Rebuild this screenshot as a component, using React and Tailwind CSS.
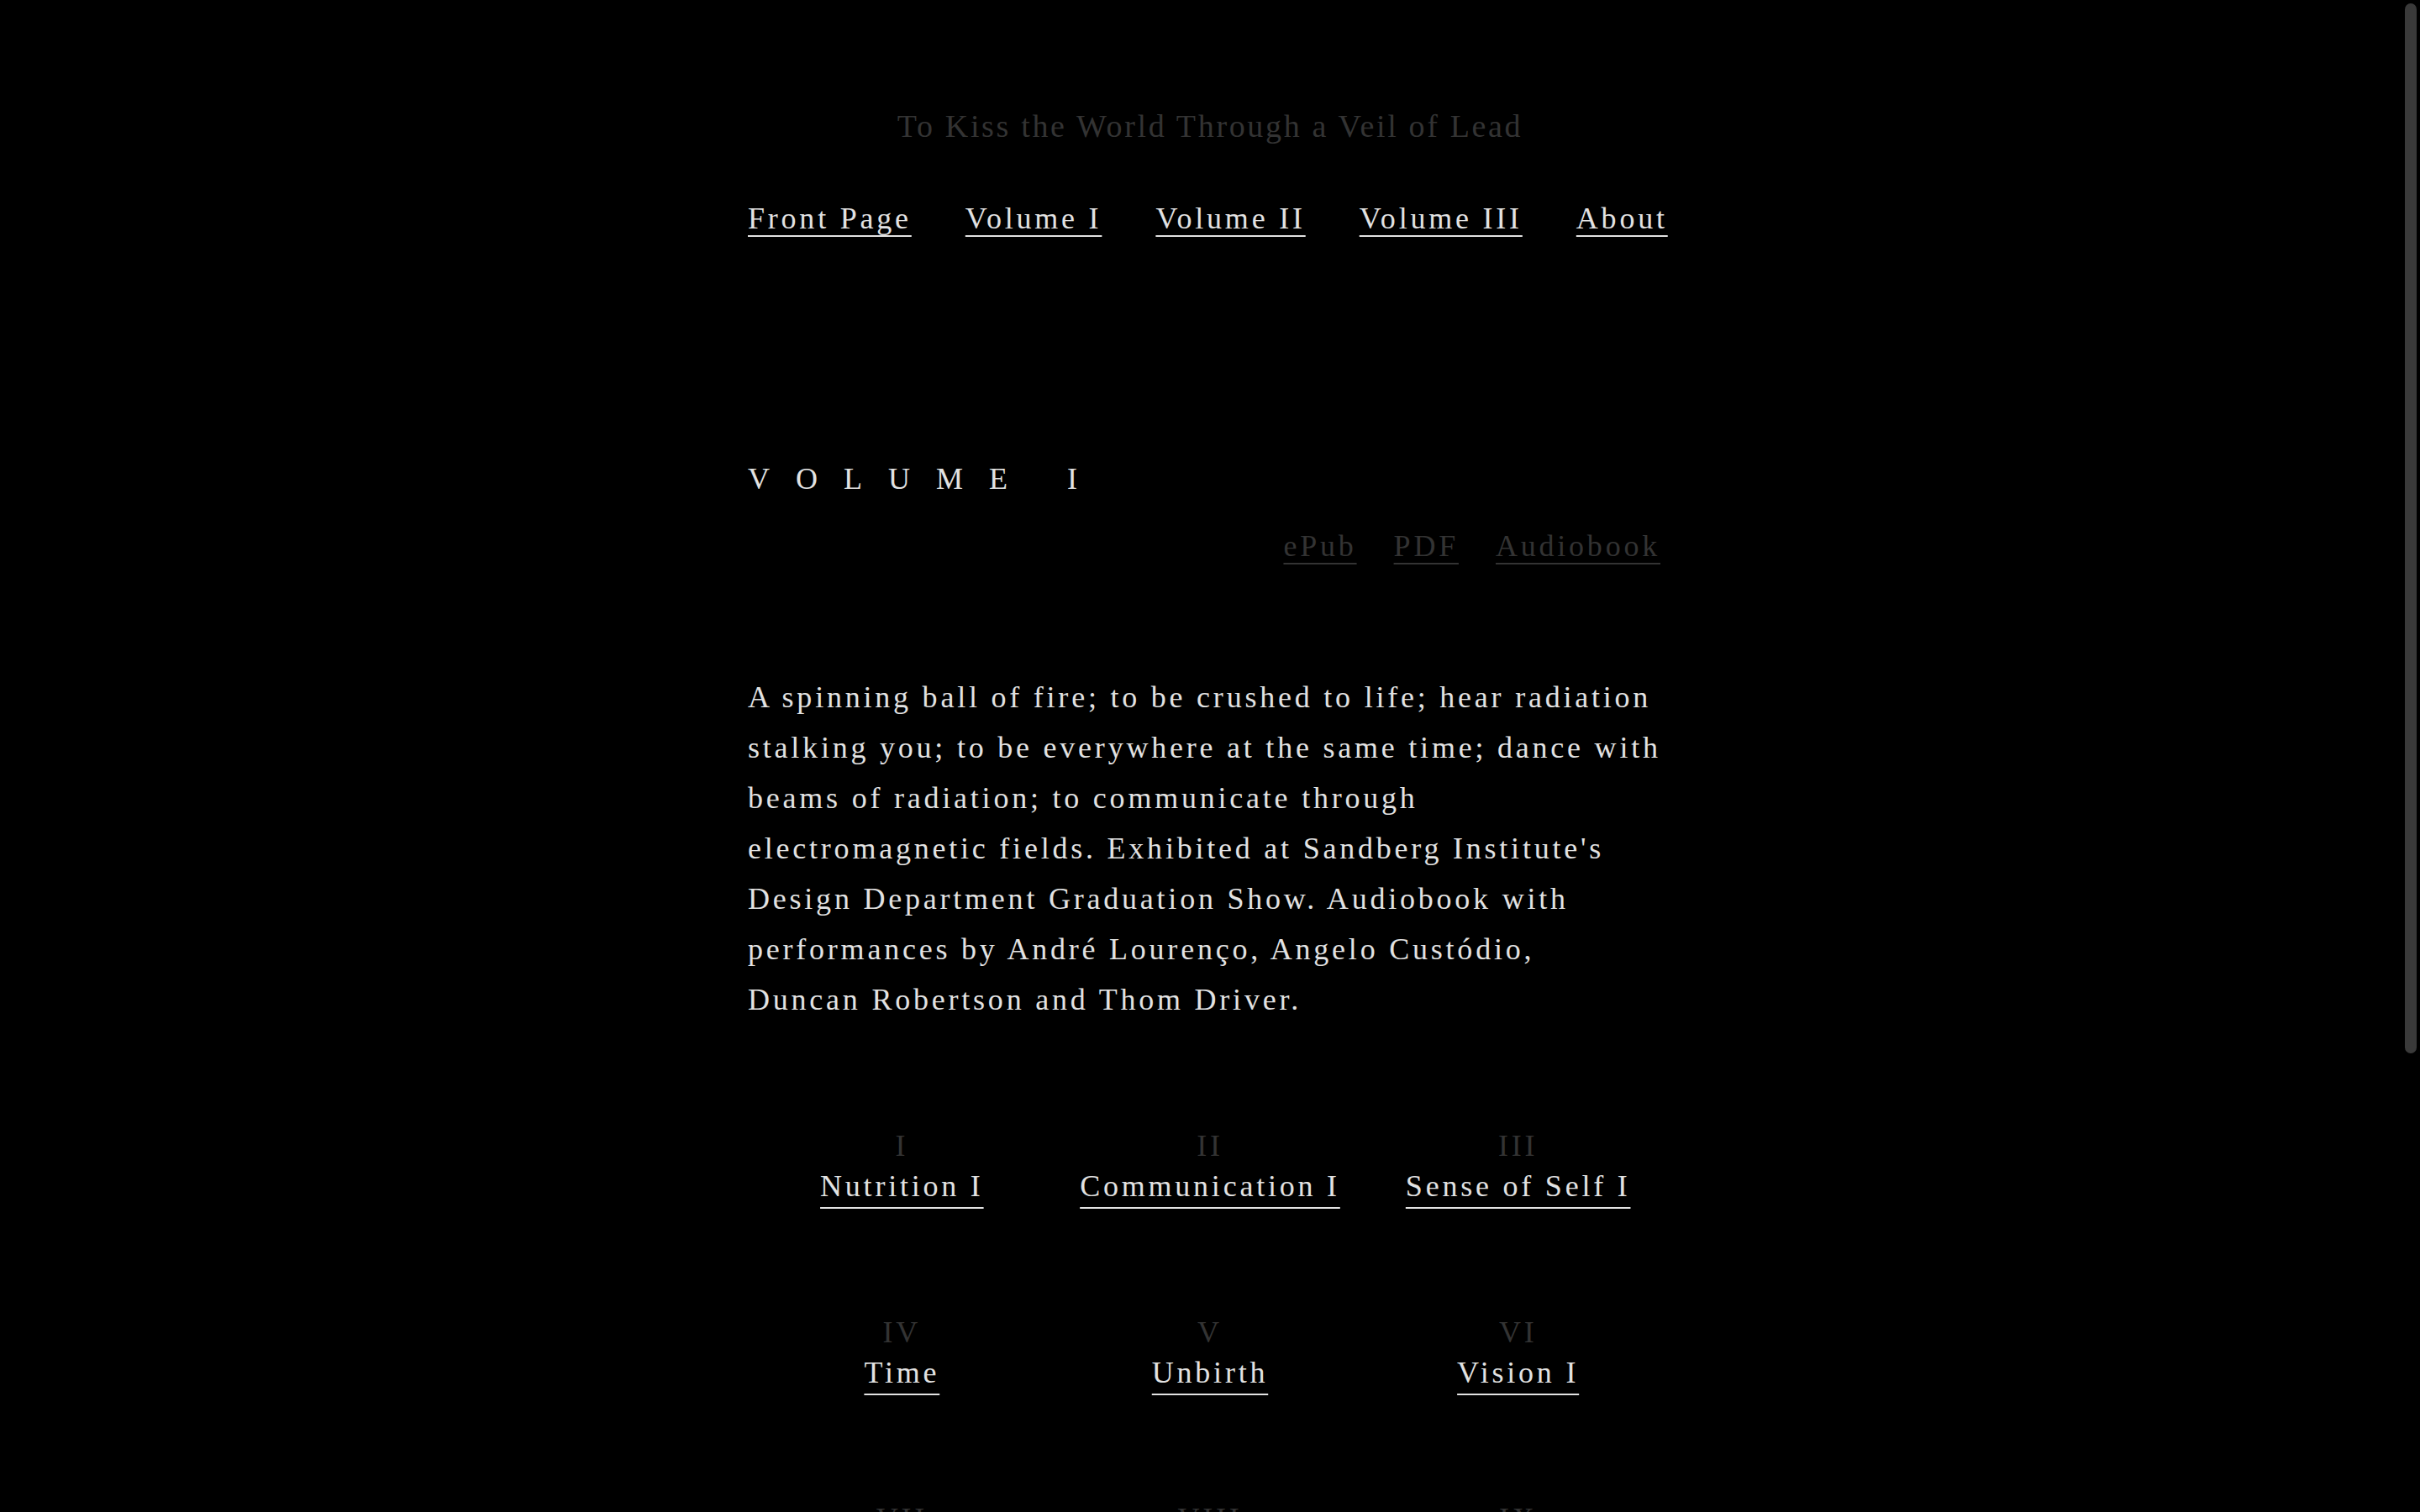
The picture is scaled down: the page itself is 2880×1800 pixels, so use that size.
const navItems = ['Front Page', 'Volume I', 'Volume II', 'Volume III', 'About'];

const chapters = [
  { num: 'I', title: 'Nutrition I' },
  { num: 'II', title: 'Communication I' },
  { num: 'III', title: 'Sense of Self I' },
  { num: 'IV', title: 'Time' },
  { num: 'V', title: 'Unbirth' },
  { num: 'VI', title: 'Vision I' },
  { num: 'VII', title: 'Nutrition II' },
  { num: 'VIII', title: 'Communication II' },
  { num: 'IX', title: 'Sense of Self II' },
];

export default function App() {
  return (
    <div className="relative h-screen overflow-hidden bg-black font-['Liberation_Serif',serif] text-[36px] tracking-[0.105em] text-[#e2e2e2]">
      <div className="mx-auto w-[1100px] pt-[120px]">
        <h1 className="text-center text-[38px] leading-[60px] tracking-[0.07em] text-[#333333] font-normal">
          To Kiss the World Through a Veil of Lead
        </h1>

        <nav className="mt-[50px] flex gap-[64px] leading-[60px]">
          {navItems.map(n => (
            <a key={n} href="#" className="underline decoration-2 underline-offset-[8px] [text-decoration-skip-ink:none]">{n}</a>
          ))}
        </nav>

        <h2 className="mt-[250px] leading-[60px] tracking-[31px] font-normal">VOLUME I</h2>

        <div className="mt-[20px] flex justify-end gap-[44px] pr-[14px] leading-[60px] text-[#333333]">
          <a href="#" className="underline decoration-2 underline-offset-[8px] [text-decoration-skip-ink:none]">ePub</a>
          <a href="#" className="underline decoration-2 underline-offset-[8px] [text-decoration-skip-ink:none]">PDF</a>
          <a href="#" className="underline decoration-2 underline-offset-[8px] [text-decoration-skip-ink:none]">Audiobook</a>
        </div>

        <p className="mt-[120px] w-[1092px] leading-[60px]">
          A spinning ball of fire; to be crushed to life; hear radiation stalking you; to be everywhere at the same time; dance with beams of radiation; to communicate through electromagnetic fields. Exhibited at Sandberg Institute's Design Department Graduation Show. Audiobook with performances by André Lourenço, Angelo Custódio, <span className="whitespace-nowrap">Duncan Robertson</span> and Thom Driver.
        </p>

        <div className="mt-[120px] grid grid-cols-3 gap-y-[126px]">
          {chapters.map(c => (
            <div key={c.num} className="flex flex-col items-center leading-[48px]">
              <div className="text-[#333333]">{c.num}</div>
              <a href="#" className="underline decoration-2 underline-offset-[13px] [text-decoration-skip-ink:none]">{c.title}</a>
            </div>
          ))}
        </div>
      </div>

      <div className="absolute right-[4px] top-[4px] h-[1250px] w-[14px] rounded-full bg-[#3a3a3a]" />
    </div>
  );
}
